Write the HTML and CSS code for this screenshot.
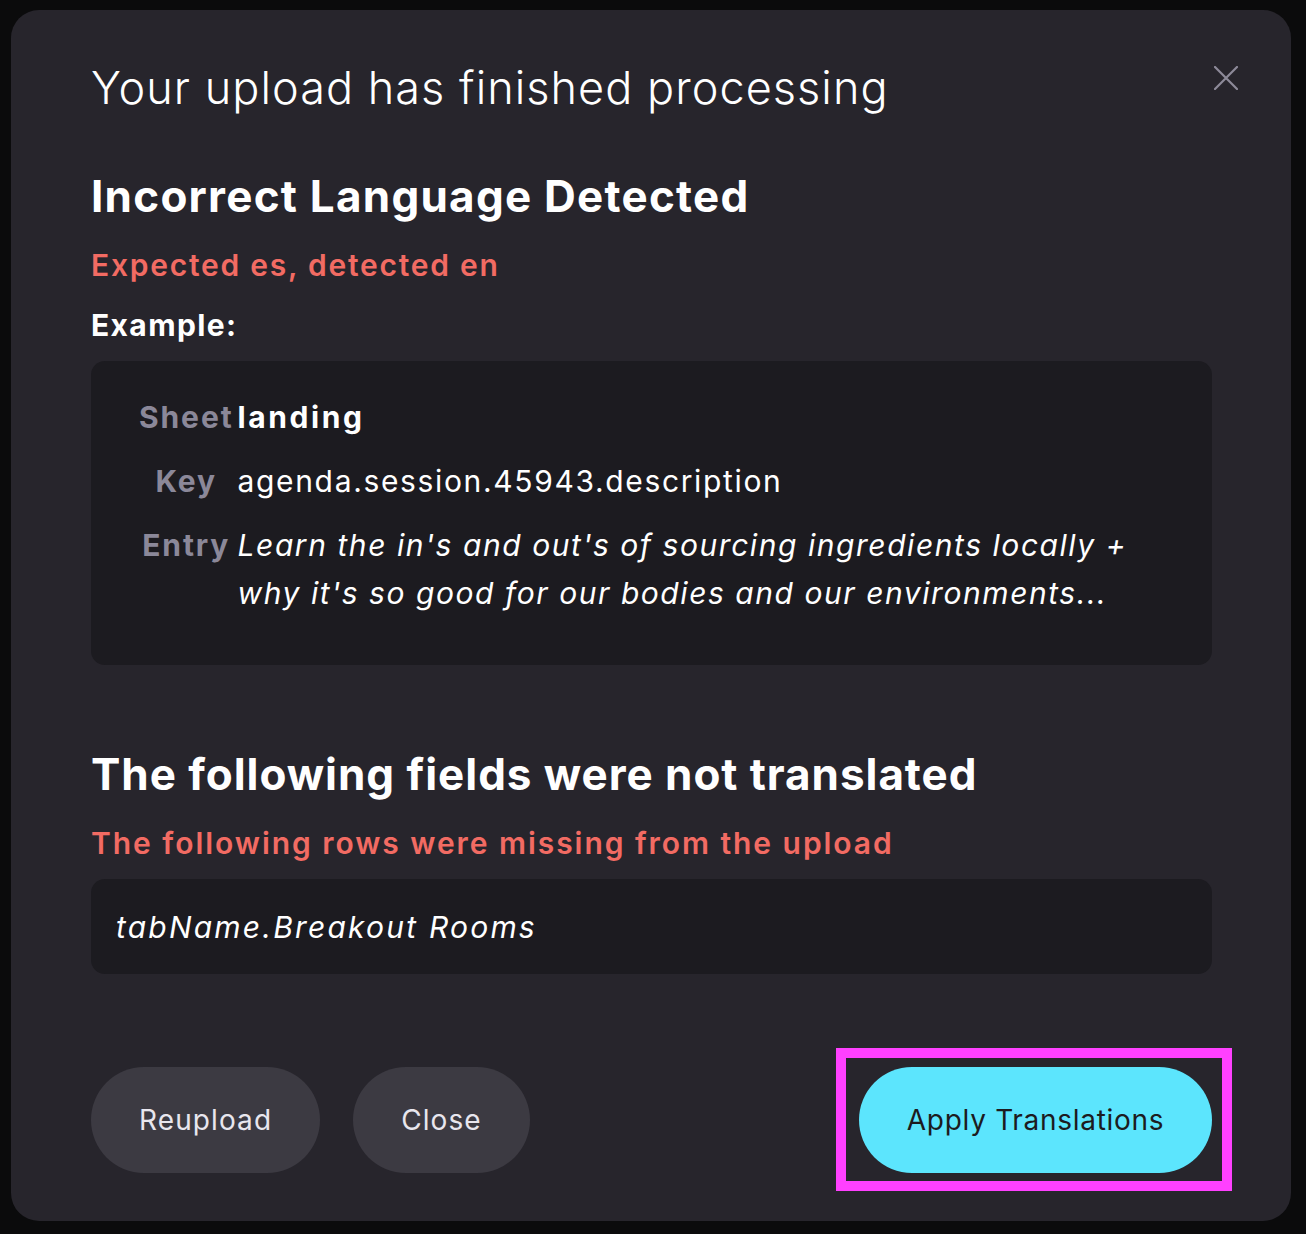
FILE: index.html
```html
<!DOCTYPE html>
<html lang="en">

<head>
    <meta charset="UTF-8">
    <title>Upload finished</title>
    <link rel="stylesheet" href="styles.css">
</head>

<body>

    <div class="modal">
        <button class="close_btn" aria-label="Close">
            <svg width="24" height="24" viewBox="0 0 24 24">
                <path d="M1 1 L23 23 M23 1 L1 23" stroke="#8d8a99" stroke-width="2.2" stroke-linecap="round" />
            </svg>
        </button>

        <h1 class="title">Your upload has finished processing</h1>

        <h2 class="section_title">Incorrect Language Detected</h2>
        <div class="warning">Expected es, detected en</div>
        <div class="example_label">Example:</div>

        <div class="panel example">
            <div class="label">Sheet</div>
            <div class="value strong">landing</div>

            <div class="label">Key</div>
            <div class="value">agenda.session.45943.description</div>

            <div class="label">Entry</div>
            <div class="value italic">Learn the in's and out's of sourcing ingredients locally + why it's so good for our bodies and our environments...</div>
        </div>

        <h2 class="section_title second">The following fields were not translated</h2>
        <div class="warning wide">The following rows were missing from the upload</div>

        <div class="panel missing">
            <span class="italic">tabName.Breakout Rooms</span>
        </div>

        <div class="actions">
            <button class="btn secondary">Reupload</button>
            <button class="btn secondary">Close</button>
            <div class="highlight">
                <button class="btn primary">Apply Translations</button>
            </div>
        </div>
    </div>

</body>

</html>
```

FILE: styles.css
```css
body {
    margin: 0;
    background: #0b0b0c;
    font-family: "Inter", "Liberation Sans", sans-serif;
    color: #fff;
}

.modal {
    position: relative;
    width: 1280px;
    box-sizing: border-box;
    margin: 10px 0 14px 11px;
    padding: 50px 79px 48px 80px;
    background: #27252c;
    border-radius: 28px;
}

.close_btn {
    position: absolute;
    top: 56px;
    right: 53px;
    padding: 0;
    border: none;
    background: none;
    cursor: pointer;
    line-height: 0;
}

.title {
    margin: 0;
    font-size: 45px;
    line-height: 56px;
    font-weight: 300;
    letter-spacing: 1.05px;
}

.section_title {
    margin: 52px 0 0;
    font-size: 44px;
    line-height: 56px;
    font-weight: 700;
    letter-spacing: 1.25px;
}

.section_title.second {
    margin-top: 81px;
    letter-spacing: 0.95px;
}

.warning {
    margin-top: 21px;
    font-size: 30px;
    line-height: 40px;
    font-weight: 600;
    color: #f26b63;
    letter-spacing: 1.75px;
}

.warning.wide {
    letter-spacing: 1.95px;
}

.example_label {
    margin-top: 20px;
    font-size: 30px;
    line-height: 40px;
    font-weight: 700;
    letter-spacing: 1.4px;
}

.panel {
    margin-top: 16px;
    background: #1c1b20;
    border-radius: 14px;
}

.example {
    display: grid;
    grid-template-columns: auto 1fr;
    column-gap: 4px;
    row-gap: 16px;
    padding: 32px 48px 48px;
}

.label {
    font-size: 30px;
    line-height: 48px;
    font-weight: 700;
    color: #8b8899;
    text-align: center;
    letter-spacing: 1.9px;
}

.value {
    font-size: 30px;
    line-height: 48px;
    font-weight: 400;
    letter-spacing: 1.65px;
}

.strong {
    font-weight: 700;
    letter-spacing: 2.6px;
}

.italic {
    font-style: italic;
}

.value.italic {
    letter-spacing: 1.55px;
}

.missing {
    padding: 24px 25px 23px;
    font-size: 30px;
    line-height: 48px;
    letter-spacing: 2.2px;
}

.actions {
    display: flex;
    align-items: center;
    gap: 33px;
    margin-top: 93px;
}

.btn {
    height: 106px;
    padding: 0 48px;
    border: none;
    border-radius: 53px;
    font-family: inherit;
    font-size: 28px;
    letter-spacing: 1.1px;
    white-space: nowrap;
    cursor: pointer;
}

.secondary {
    background: #3c3a42;
    color: #e8e6ee;
}

.primary {
    width: 353px;
    padding: 0;
    background: #5ce5fd;
    color: #1c1b20;
    letter-spacing: 0.7px;
}

.highlight {
    margin: -19px -20px -18px auto;
    padding: 9px 10px 8px 13px;
    border: 10px solid #ff40ff;
    line-height: 0;
}
```
